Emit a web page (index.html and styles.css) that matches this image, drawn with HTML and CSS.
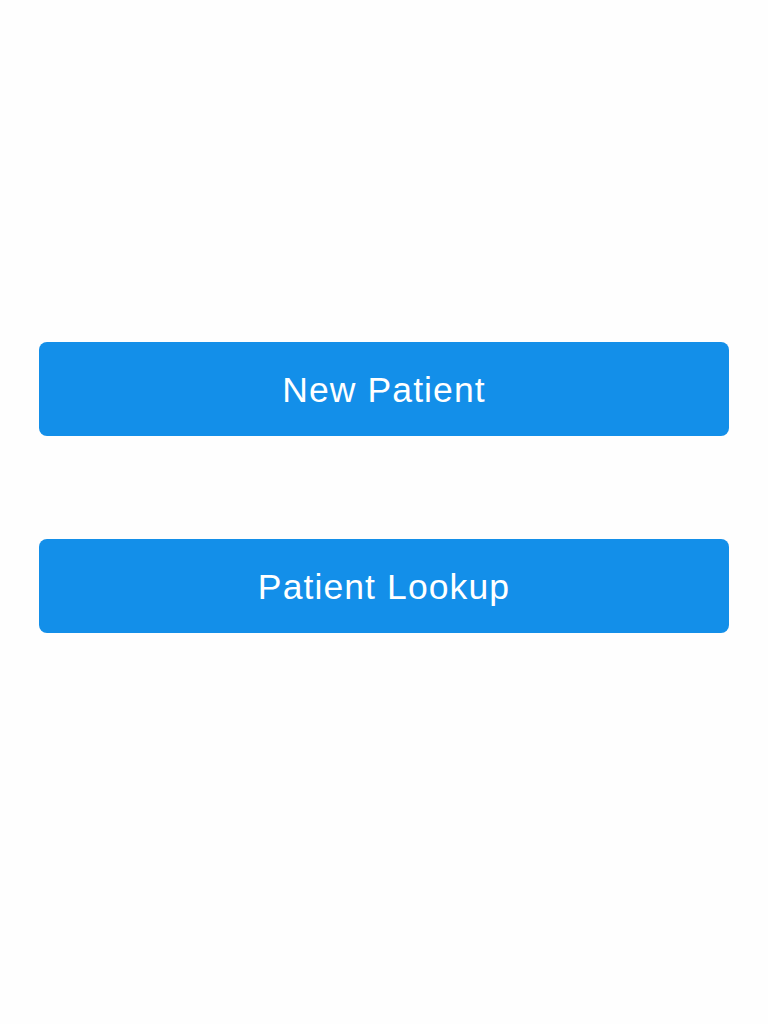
FILE: index.html
```html
<!DOCTYPE html>
<html>
<head>
<meta charset="utf-8">
<link rel="stylesheet" href="styles.css">
</head>
<body>
<main class="menu">
  <button class="btn">New Patient</button>
  <button class="btn">Patient Lookup</button>
</main>
</body>
</html>
```
FILE: styles.css
```css
html, body {
  margin: 0;
  padding: 0;
  background: #fefefe;
}
.menu {
  display: flex;
  flex-direction: column;
  gap: 103px;
  padding: 342px 39px 0 39px;
}
.btn {
  height: 94px;
  border: none;
  border-radius: 8px;
  background: #138fe9;
  color: #ffffff;
  font-family: "Liberation Sans", Arial, sans-serif;
  font-size: 35.5px;
  letter-spacing: 1.1px;
  padding: 2px 0 0 0;
  margin: 0;
}
```
